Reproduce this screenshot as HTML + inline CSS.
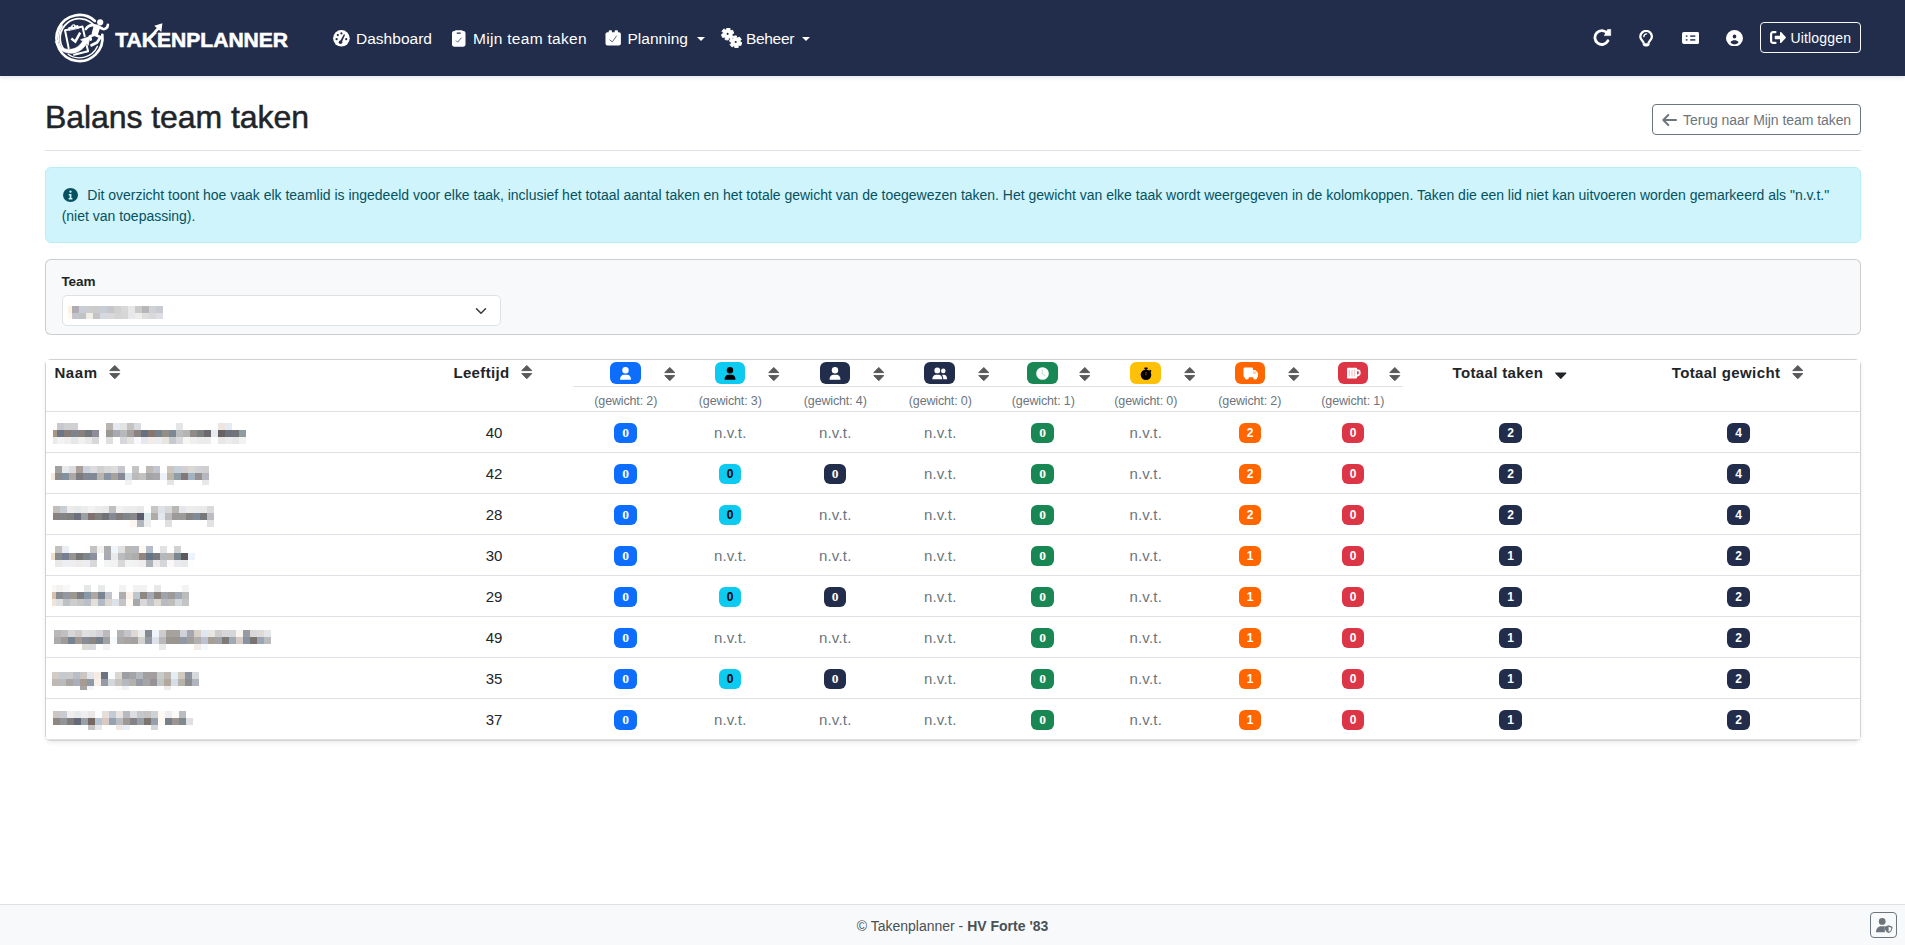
<!DOCTYPE html>
<html lang="nl">
<head>
<meta charset="utf-8">
<title>Balans team taken - Takenplanner</title>
<style>
*{box-sizing:border-box}
html,body{margin:0;padding:0}
body{width:1905px;height:945px;overflow:hidden;background:#fff;color:#212529;font-family:"Liberation Sans",sans-serif;font-size:15px;position:relative}
.abs{position:absolute}
svg{display:block}
/* NAVBAR */
#nav{position:absolute;left:0;top:0;width:1905px;height:76px;background:#212d4b;box-shadow:0 2px 4px rgba(0,0,0,.09)}
#nav .item{position:absolute;top:1px;height:76px;color:#fff;font-size:15.5px;line-height:76px;white-space:nowrap}
#nav .ic{position:absolute}
.caret{position:absolute;width:0;height:0;border-left:4px solid transparent;border-right:4px solid transparent;border-top:4px solid #fff}
#logout{position:absolute;left:1760px;top:22px;width:101px;height:31px;border:1px solid #f8f9fa;border-radius:4px;color:#fff;font-size:14px}
/* PAGE */
h2{position:absolute;left:45px;top:98px;margin:0;font-size:32px;line-height:38px;font-weight:400;letter-spacing:-.07px;color:#212529;white-space:nowrap;-webkit-text-stroke:.5px #212529}
#back{position:absolute;left:1652px;top:104px;width:209px;height:31px;border:1px solid #6c757d;border-radius:4px;color:#6c757d;font-size:13.5px}
#hr{position:absolute;left:45px;top:150px;width:1816px;height:1px;background:#dee2e6}
#alert{position:absolute;left:45px;top:167px;width:1816px;height:76px;background:#cff4fc;border:1px solid #b6effb;border-radius:6px;color:#055160;font-size:13px}
#filter{position:absolute;left:45px;top:259px;width:1816px;height:76px;background:#f8f9fa;border:1px solid rgba(0,0,0,.175);border-radius:6px}
#tcard{position:absolute;left:45px;top:359px;width:1816px;height:382px;background:#fff;border:1px solid rgba(0,0,0,.175);border-radius:6px;box-shadow:0 2px 4px rgba(0,0,0,.075)}
#tcard:before{content:"";position:absolute;left:0;top:0;right:0;bottom:0;background:#fff}
#footer{position:absolute;left:0;top:904px;width:1905px;height:41px;background:#f8f9fa;border-top:1px solid #dee2e6;color:#495057;font-size:14px;text-align:center;line-height:43px}

#tbl{position:absolute;left:0;top:0;width:1905px;height:945px}
.th{position:absolute;font-weight:700;font-size:15px;line-height:20px;white-space:nowrap;color:#212529}
.gw{position:absolute;top:391px;text-align:center;font-size:12.500px;line-height:20px;color:#6c757d;letter-spacing:-.15px;padding-left:1.500px}
.hl{position:absolute;left:46px;width:1814px;height:1px;background:#dee2e6}
.td{position:absolute;height:40px;line-height:41px;text-align:center;font-size:15px;color:#212529}
.td.nvt{color:#6c757d;letter-spacing:.2px;padding-left:1.500px}
.bdg{position:absolute;height:20px;border-radius:6px;text-align:center;font-weight:700;font-size:12px;line-height:21px}
.bdg.sf{font-family:"Liberation Serif",serif;font-size:13.500px;line-height:20px}
/*ENDTBL*/
</style>
</head>
<body>
<div id="nav">
<!-- logo -->
<svg class="ic" style="left:50px;top:8px" width="70" height="60" viewBox="0 0 70 60" fill="none" stroke="#fff" stroke-linecap="round" stroke-linejoin="round">
<path d="M52.28 26.80A23 23 0 1 1 44.89 12.91" stroke-width="2.7"/>
<path d="M14.72 42.41A19.3 19.3 0 1 1 44.71 18.12" stroke-width="1.7"/>
<path d="M11.31 40.50A21 21 0 0 1 12.30 17.95" stroke-width="1.4"/>
<path d="M47.44 38.37A19.8 19.8 0 0 1 18.14 46.22" stroke-width="1.3"/>
<path d="M5.300 33.500C7.500 41 14 45.800 22 45.300C29.500 44.800 35.500 39.500 38 32.500L33.500 31.500C30.500 37.500 25.500 41.300 19.500 41.300C13 41.300 8.500 38.500 5.300 33.500Z" fill="#fff" stroke-width=".5"/>
<path d="M31 31.600L39.800 28.600L38.300 37Z" fill="#fff" stroke-width=".8"/>
<path d="M15 22.300L18.700 40.300M32.400 18.500L34.700 28.300M36.800 38L38.100 43.200L24 46.700M15 22.300L19 21.400M28.300 19.400L32.400 18.500" stroke-width="2"/>
<path d="M19 22L18.600 19.700L21.200 19.100C21.100 16.600 25 15.800 25.700 18.100L28 17.600L28.500 19.900Z" fill="#fff" stroke-width=".9"/>
<circle cx="23.400" cy="18.200" r=".8" fill="#212d4b" stroke="none"/>
<path d="M21.300 30.600L25.300 33.700L30.200 24.600" stroke-width="2.500" stroke-linecap="butt" stroke-linejoin="miter"/>
<circle cx="50.200" cy="14.300" r="3.100" fill="#fff" stroke="none"/>
<path d="M47 18L52.500 20.800C55.300 21.800 57.600 19.800 57.900 16.800M46 17.700C42 16.500 38 18 35.800 21M44.500 26.500L50.500 29.300L47 34.500L41.500 37.300M44 26.800L39.800 28.400L40.800 31.500" stroke-width="2.700"/>
<path d="M44.500 18.300L49.200 20L46.800 27L42.600 25.300Z" fill="#fff" stroke-width="1.800"/>
</svg>
<svg class="ic" style="left:112px;top:18px" width="184" height="36" viewBox="112 18 184 36">
<text x="115.300" y="47" font-family="'Liberation Sans',sans-serif" font-weight="700" font-size="19.600" fill="#fff" stroke="#fff" stroke-width=".55" textLength="172.800" lengthAdjust="spacingAndGlyphs">TAKENPLANNER</text>
<path d="M150.600 37.800C153.500 33.500 156.500 30 159.500 27" stroke="#fff" stroke-width="2.600" fill="none"/>
<path d="M154.300 25.700L162.400 23.300L161.300 31.900Z" fill="#fff"/>
</svg>
<!-- nav items -->
<svg class="ic" style="left:333px;top:29.500px" width="17" height="17" viewBox="0 0 17 17"><circle cx="8.400" cy="8.300" r="8.300" fill="#fff"/><g fill="#212d4b"><circle cx="3.600" cy="9.200" r="1.100"/><circle cx="4.800" cy="5.100" r="1.100"/><circle cx="8.400" cy="3.400" r="1.100"/><circle cx="13.200" cy="9.200" r="1.100"/><circle cx="7.500" cy="12.300" r="1.800"/><path d="M6.800 11.800L10.900 4.200L12.100 4.800L8.600 12.700Z"/></g></svg>
<div class="item" style="left:356px;letter-spacing:.02px">Dashboard</div>
<svg class="ic" style="left:452px;top:29.500px" width="14" height="17" viewBox="0 0 14 17"><rect x="0" y=".9" width="13.500" height="15.800" rx="2.100" fill="#fff"/><rect x="2.700" y=".3" width="8.100" height="3" rx="1.200" fill="#fff"/><rect x="4.600" y="2.400" width="4.300" height="1.300" rx=".65" fill="#212d4b"/><path d="M4 10.600L5.600 12.200L9.500 7.700" stroke="#5d657c" stroke-width="1" fill="none"/></svg>
<div class="item" style="left:473px;letter-spacing:.3px">Mijn team taken</div>
<svg class="ic" style="left:605px;top:29.500px" width="16" height="16" viewBox="0 0 16 16"><rect x=".5" y="2.300" width="15.400" height="13.200" rx="2" fill="#fff"/><rect x="3.800" y=".3" width="3.200" height="3.500" rx=".9" fill="#fff"/><rect x="9.700" y=".3" width="3.200" height="3.500" rx=".9" fill="#fff"/><path d="M4.600 9.800L7.300 11.900L11.700 5.700" stroke="#5d657c" stroke-width="1" fill="none"/></svg>
<div class="item" style="left:627.500px;letter-spacing:.02px">Planning</div>
<div class="caret" style="left:697px;top:36.500px"></div>
<svg class="ic" style="left:720.500px;top:28px" width="21" height="20" viewBox="0 0 21 20"><path d="M5.48 1.54L6.02 -0.27L9.06 0.21L9.01 2.10L9.82 2.75L11.65 2.31L12.76 5.19L11.10 6.09L10.93 7.11L12.24 8.48L10.30 10.88L8.68 9.89L7.72 10.26L7.18 12.07L4.14 11.59L4.19 9.70L3.38 9.05L1.55 9.49L0.44 6.61L2.10 5.71L2.27 4.69L0.96 3.32L2.90 0.92L4.52 1.91Z" fill="#fff" stroke="#fff" stroke-width=".9" stroke-linejoin="round"/><circle cx="6.6" cy="5.9" r="1.050" fill="#212d4b"/><path d="M12.29 10.20L12.24 8.31L15.28 7.83L15.82 9.64L16.78 10.01L18.40 9.02L20.34 11.42L19.03 12.79L19.20 13.81L20.86 14.71L19.75 17.59L17.92 17.15L17.11 17.80L17.16 19.69L14.12 20.17L13.58 18.36L12.62 17.99L11.00 18.98L9.06 16.58L10.37 15.21L10.20 14.19L8.54 13.29L9.65 10.41L11.48 10.85Z" fill="#fff" stroke="#fff" stroke-width=".9" stroke-linejoin="round"/><circle cx="14.7" cy="14" r="1.050" fill="#212d4b"/></svg>
<div class="item" style="left:746px;letter-spacing:-.33px">Beheer</div>
<div class="caret" style="left:802px;top:36.500px"></div>
<!-- right icons -->
<svg class="ic" style="left:1593px;top:29.200px" width="19" height="17" viewBox="0 0 19 17"><path d="M14.89 11.80A6.9 6.9 0 1 1 14.24 4.31" stroke="#fff" stroke-width="2.800" fill="none" stroke-linecap="round"/><path d="M14.600 .5L17.700 .3V6.600H11.300Z" fill="#fff" stroke="#fff" stroke-width=".6" stroke-linejoin="round"/></svg>
<svg class="ic" style="left:1639px;top:29.500px" width="15" height="17" viewBox="0 0 15 17"><path d="M4.800 13.400C4.800 11.300 1.300 9.800 1.300 6.700A5.800 5.800 0 0 1 12.900 6.700C12.900 9.800 9.400 11.300 9.400 13.400" stroke="#fff" stroke-width="2.300" fill="none"/><path d="M3.700 13.200h6.900v.9c0 1.300-1 2.300-2.300 2.300H6c-1.300 0-2.300-1-2.300-2.300z" fill="#fff"/><path d="M4.800 6.600A3 3 0 0 1 7.600 3.900" stroke="#fff" stroke-width="1.400" fill="none" stroke-linecap="round"/></svg>
<svg class="ic" style="left:1681.600px;top:32px" width="17.300" height="12" viewBox="0 0 17.300 12"><rect width="17.300" height="12" rx="1.900" fill="#fff"/><g fill="#4a5470"><rect x="3.800" y="3.200" width="1.700" height="1.700" rx=".3"/><rect x="3.800" y="7.100" width="1.700" height="1.700" rx=".3"/><rect x="8.100" y="3.200" width="5.300" height="1.700" rx=".5"/><rect x="8.100" y="7.100" width="5.300" height="1.700" rx=".5"/></g></svg>
<svg class="ic" style="left:1725.800px;top:29.800px" width="17" height="16.500" viewBox="0 0 17 16.500"><ellipse cx="8.500" cy="8.250" rx="8.500" ry="8.200" fill="#fff"/><ellipse cx="8.500" cy="6.400" rx="1.800" ry="2" fill="#212d4b"/><path d="M4.500 12.200C5.500 10.800 6.800 10.300 8.500 10.300S11.500 10.800 12.500 12.200C11.500 13.600 10.200 14.200 8.500 14.200S5.500 13.600 4.500 12.200Z" fill="#212d4b"/></svg>
<div id="logout">
<svg class="ic" style="left:9px;top:7.700px" width="16" height="13" viewBox="0 0 16 13"><path d="M5.500 1.100H3.100A2 2 0 0 0 1.100 3.100V9.900A2 2 0 0 0 3.100 11.900H5.500" stroke="#fff" stroke-width="2.200" fill="none" stroke-linecap="round"/><path d="M5.500 4.700H10V1.600C10 1 10.700 .7 11.100 1.100L15.700 5.900C16 6.200 16 6.800 15.700 7.100L11.100 11.900C10.700 12.300 10 12 10 11.400V8.300H5.500A.8 .8 0 0 1 4.700 7.500V5.500A.8 .8 0 0 1 5.500 4.700Z" fill="#fff"/></svg>
<span class="abs" style="left:29.400px;top:1px;line-height:29px;letter-spacing:.18px">Uitloggen</span>
</div>
</div>
<h2>Balans team taken</h2>
<div id="back">
<svg class="abs" style="left:8.800px;top:8.800px" width="15" height="12" viewBox="0 0 15 12"><path d="M14.200 6H1.500M6.300 1L1.300 6L6.300 11" stroke="#6c757d" stroke-width="1.900" fill="none" stroke-linecap="round" stroke-linejoin="round"/></svg>
<span class="abs" style="left:30px;top:0;line-height:30px;white-space:nowrap;letter-spacing:-.06px;font-size:14px">Terug naar Mijn team taken</span>
</div>
<div id="hr"></div>
<div id="alert">
<svg class="abs" style="left:17px;top:19.800px" width="15" height="14" viewBox="0 .5 15 14"><ellipse cx="7.500" cy="7.500" rx="7.500" ry="7" fill="#055160"/><circle cx="7.500" cy="4.200" r="1.150" fill="#cff4fc"/><path d="M5.800 6.600h2.600v3.900h1v1.400H5.700v-1.400h1V8H5.800z" fill="#cff4fc"/></svg>
<div class="abs" id="atext" style="left:15.700px;top:17px;width:1790px;line-height:21px;font-size:14px;text-indent:25.600px;letter-spacing:-.008px">Dit overzicht toont hoe vaak elk teamlid is ingedeeld voor elke taak, inclusief het totaal aantal taken en het totale gewicht van de toegewezen taken. Het gewicht van elke taak wordt weergegeven in de kolomkoppen. Taken die een lid niet kan uitvoeren worden gemarkeerd als "n.v.t." (niet van toepassing).</div>
</div>
<div id="filter">
<div class="abs" style="left:15.400px;top:12.500px;font-weight:700;font-size:13.500px;line-height:18px;letter-spacing:-.05px">Team</div>
<div class="abs" id="sel" style="left:16px;top:35px;width:439px;height:31px;background:#fff;border:1px solid #dee2e6;border-radius:5px">
<!--TEAMBLUR--><svg class="abs" style="left:-63px;top:-296px" width="300" height="400" viewBox="0 0 300 400" shape-rendering="crispEdges"><rect x="68" y="306" width="4" height="7" fill="#fdf2e0"/><rect x="72" y="306" width="7" height="7" fill="#b0acb4"/><rect x="79" y="306" width="7" height="7" fill="#c8cdd6"/><rect x="86" y="306" width="7" height="7" fill="#cccccc"/><rect x="93" y="306" width="7" height="7" fill="#cbcbcc"/><rect x="100" y="306" width="7" height="7" fill="#c8ccd4"/><rect x="107" y="306" width="7" height="7" fill="#c4c6cc"/><rect x="114" y="306" width="7" height="7" fill="#d0d0ce"/><rect x="121" y="306" width="7" height="7" fill="#d8d8d8"/><rect x="128" y="306" width="7" height="7" fill="#e6e7e8"/><rect x="135" y="306" width="7" height="7" fill="#cacac8"/><rect x="142" y="306" width="7" height="7" fill="#b6b6b8"/><rect x="149" y="306" width="7" height="7" fill="#d0d1d4"/><rect x="156" y="306" width="7" height="7" fill="#c8cbd2"/><rect x="68" y="313" width="4" height="6" fill="#fff8ec"/><rect x="72" y="313" width="7" height="6" fill="#c4c5cc"/><rect x="79" y="313" width="7" height="6" fill="#bfc3c6"/><rect x="86" y="313" width="7" height="6" fill="#f0eee6"/><rect x="93" y="313" width="7" height="6" fill="#c4c4c6"/><rect x="100" y="313" width="7" height="6" fill="#d6dae0"/><rect x="107" y="313" width="7" height="6" fill="#d8d9dc"/><rect x="114" y="313" width="7" height="6" fill="#d4d4d2"/><rect x="121" y="313" width="7" height="6" fill="#d6d6d6"/><rect x="128" y="313" width="7" height="6" fill="#e8e8ea"/><rect x="135" y="313" width="7" height="6" fill="#ededed"/><rect x="142" y="313" width="7" height="6" fill="#dededc"/><rect x="149" y="313" width="7" height="6" fill="#d8d8d8"/><rect x="156" y="313" width="7" height="6" fill="#dedfe4"/></svg>
<svg class="abs" style="left:412px;top:8.500px" width="12" height="12" viewBox="0 0 16 16"><path d="M2 5l6 6 6-6" fill="none" stroke="#343a40" stroke-width="2" stroke-linecap="round" stroke-linejoin="round"/></svg>
</div>
</div>
<div id="tcard"></div>
<div id="tbl">
<div class="th" style="left:54.400px;top:362.500px;letter-spacing:.6px">Naam</div><svg class="abs" style="left:109.2px;top:364.8px" width="11.6" height="14.2" viewBox="0 0 11.6 14.2"><path d="M5.800 .5L10.800 5.600H.8Z" fill="#58595b" stroke="#58595b" stroke-width="1" stroke-linejoin="round"/><path d="M.8 8.600H10.800L5.800 13.700Z" fill="#58595b" stroke="#58595b" stroke-width="1" stroke-linejoin="round"/></svg>
<div class="th" style="left:453.400px;top:362.500px;letter-spacing:.36px">Leeftijd</div><svg class="abs" style="left:521.2px;top:364.8px" width="11.6" height="14.2" viewBox="0 0 11.6 14.2"><path d="M5.800 .5L10.800 5.600H.8Z" fill="#58595b" stroke="#58595b" stroke-width="1" stroke-linejoin="round"/><path d="M.8 8.600H10.800L5.800 13.700Z" fill="#58595b" stroke="#58595b" stroke-width="1" stroke-linejoin="round"/></svg>
<div class="th" style="left:1452.500px;top:362.500px;letter-spacing:.36px">Totaal taken</div>
<svg class="abs" style="left:1555px;top:371.500px" width="11.600" height="7.200" viewBox="0 0 11.600 7.200"><path d="M.8 1H10.800L5.800 6.300Z" fill="#212529" stroke="#212529" stroke-width="1.200" stroke-linejoin="round"/></svg>
<div class="th" style="left:1671.700px;top:362.500px;letter-spacing:.4px">Totaal gewicht</div><svg class="abs" style="left:1791.8px;top:364.5px" width="11.6" height="14.2" viewBox="0 0 11.6 14.2"><path d="M5.800 .5L10.800 5.600H.8Z" fill="#58595b" stroke="#58595b" stroke-width="1" stroke-linejoin="round"/><path d="M.8 8.600H10.800L5.800 13.700Z" fill="#58595b" stroke="#58595b" stroke-width="1" stroke-linejoin="round"/></svg>
<div class="abs" style="left:573px;top:386px;width:830px;height:1px;background:#dee2e6"></div>
<svg class="abs" style="left:610px;top:362px" width="31" height="22" viewBox="0.0 0 31 22"><rect x="0.0" width="31" height="22" rx="6" fill="#0d6efd"/><circle cx="15.5" cy="8.3" r="3.2" fill="#fff"/><path d="M10 17.700c0-3 1.800-4.900 4-4.900h3c2.200 0 4 1.900 4 4.900z" fill="#fff"/></svg>
<svg class="abs" style="left:663.6px;top:366.7px" width="11.6" height="14.2" viewBox="0 0 11.6 14.2"><path d="M5.800 .5L10.800 5.600H.8Z" fill="#58595b" stroke="#58595b" stroke-width="1" stroke-linejoin="round"/><path d="M.8 8.600H10.800L5.800 13.700Z" fill="#58595b" stroke="#58595b" stroke-width="1" stroke-linejoin="round"/></svg>
<div class="gw" style="left:573px;width:104px">(gewicht: 2)</div>
<svg class="abs" style="left:715px;top:362px" width="31" height="22" viewBox="0.5 0 31 22"><rect x="0.5" width="30" height="22" rx="6" fill="#0dcaf0"/><circle cx="15.5" cy="8.3" r="3.2" fill="#000"/><path d="M10 17.700c0-3 1.800-4.900 4-4.900h3c2.200 0 4 1.900 4 4.900z" fill="#000"/></svg>
<svg class="abs" style="left:768.3px;top:366.7px" width="11.6" height="14.2" viewBox="0 0 11.6 14.2"><path d="M5.800 .5L10.800 5.600H.8Z" fill="#58595b" stroke="#58595b" stroke-width="1" stroke-linejoin="round"/><path d="M.8 8.600H10.800L5.800 13.700Z" fill="#58595b" stroke="#58595b" stroke-width="1" stroke-linejoin="round"/></svg>
<div class="gw" style="left:677px;width:105px">(gewicht: 3)</div>
<svg class="abs" style="left:820px;top:362px" width="31" height="22" viewBox="0.5 0 31 22"><rect x="0.5" width="30" height="22" rx="6" fill="#212d4b"/><circle cx="15.5" cy="8.3" r="3.2" fill="#fff"/><path d="M10 17.700c0-3 1.800-4.900 4-4.900h3c2.200 0 4 1.900 4 4.900z" fill="#fff"/></svg>
<svg class="abs" style="left:873.1px;top:366.7px" width="11.6" height="14.2" viewBox="0 0 11.6 14.2"><path d="M5.800 .5L10.800 5.600H.8Z" fill="#58595b" stroke="#58595b" stroke-width="1" stroke-linejoin="round"/><path d="M.8 8.600H10.800L5.800 13.700Z" fill="#58595b" stroke="#58595b" stroke-width="1" stroke-linejoin="round"/></svg>
<div class="gw" style="left:782px;width:105px">(gewicht: 4)</div>
<svg class="abs" style="left:924px;top:362px" width="31" height="22" viewBox="0.0 0 31 22"><rect x="0.0" width="31" height="22" rx="6" fill="#212d4b"/><circle cx="13.300" cy="8.400" r="2.900" fill="#fff"/><path d="M8.300 17.300c0-2.800 1.600-4.600 3.700-4.600h2.600c2.100 0 3.700 1.800 3.700 4.600z" fill="#fff"/><circle cx="19.300" cy="8.900" r="2.300" fill="#fff"/><path d="M19.300 17.300c0-1.800-.4-3.200-1.300-4.300.3-.1.600-.2 1-.2h1c1.700 0 3 1.600 3 4v.5z" fill="#fff"/></svg>
<svg class="abs" style="left:977.8px;top:366.7px" width="11.6" height="14.2" viewBox="0 0 11.6 14.2"><path d="M5.800 .5L10.800 5.600H.8Z" fill="#58595b" stroke="#58595b" stroke-width="1" stroke-linejoin="round"/><path d="M.8 8.600H10.800L5.800 13.700Z" fill="#58595b" stroke="#58595b" stroke-width="1" stroke-linejoin="round"/></svg>
<div class="gw" style="left:887px;width:105px">(gewicht: 0)</div>
<svg class="abs" style="left:1027px;top:362px" width="31" height="22" viewBox="0.0 0 31 22"><rect x="0.0" width="31" height="22" rx="6" fill="#198754"/><circle cx="15.500" cy="11.500" r="6.300" fill="#fff"/><path d="M15.300 7.800v4l2.600 1.700" stroke="#c6e6d6" stroke-width="1.200" fill="none" stroke-linecap="round"/></svg>
<svg class="abs" style="left:1078.8px;top:366.7px" width="11.6" height="14.2" viewBox="0 0 11.6 14.2"><path d="M5.800 .5L10.800 5.600H.8Z" fill="#58595b" stroke="#58595b" stroke-width="1" stroke-linejoin="round"/><path d="M.8 8.600H10.800L5.800 13.700Z" fill="#58595b" stroke="#58595b" stroke-width="1" stroke-linejoin="round"/></svg>
<div class="gw" style="left:992px;width:101px">(gewicht: 1)</div>
<svg class="abs" style="left:1130px;top:362px" width="31" height="22" viewBox="0.0 0 31 22"><rect x="0.0" width="31" height="22" rx="6" fill="#ffc107"/><circle cx="16" cy="12.800" r="5.300" fill="#000"/><rect x="14.300" y="5.500" width="3.400" height="1.500" rx=".5" fill="#000"/><rect x="15.300" y="6.200" width="1.400" height="2" fill="#000"/><rect x="15.500" y="9.800" width="1" height="3.600" rx=".5" fill="#7a4a00"/><path d="M19.600 8l1.100 1.100-1 1" stroke="#000" stroke-width="1.200" fill="none"/></svg>
<svg class="abs" style="left:1183.9px;top:366.7px" width="11.6" height="14.2" viewBox="0 0 11.6 14.2"><path d="M5.800 .5L10.800 5.600H.8Z" fill="#58595b" stroke="#58595b" stroke-width="1" stroke-linejoin="round"/><path d="M.8 8.600H10.800L5.800 13.700Z" fill="#58595b" stroke="#58595b" stroke-width="1" stroke-linejoin="round"/></svg>
<div class="gw" style="left:1093px;width:104px">(gewicht: 0)</div>
<svg class="abs" style="left:1235px;top:362px" width="31" height="22" viewBox="0.5 0 31 22"><rect x="0.5" width="30" height="22" rx="6" fill="#ff6600"/><g transform="translate(1.100 0) scale(.93 1)"><path d="M8.500 6.800a1.200 1.200 0 0 1 1.200-1.200h7.800a1.200 1.200 0 0 1 1.200 1.200v1.300h2.100c.4 0 .7.100 1 .400l1.900 1.900c.300.300.400.600.400 1v3.800h-.800a2.300 2.300 0 0 1-4.600 0h-4.400a2.300 2.300 0 0 1-4.600 0h-.0a1.200 1.200 0 0 1-1.200-1.200z" fill="#fff"/><circle cx="12" cy="15.200" r="1.600" fill="#fff"/><circle cx="21" cy="15.200" r="1.600" fill="#fff"/><path d="M18.700 9.300h2.100l1.800 1.800v.6h-3.900z" fill="#ffc9a3"/></g></svg>
<svg class="abs" style="left:1288.3px;top:366.7px" width="11.6" height="14.2" viewBox="0 0 11.6 14.2"><path d="M5.800 .5L10.800 5.600H.8Z" fill="#58595b" stroke="#58595b" stroke-width="1" stroke-linejoin="round"/><path d="M.8 8.600H10.800L5.800 13.700Z" fill="#58595b" stroke="#58595b" stroke-width="1" stroke-linejoin="round"/></svg>
<div class="gw" style="left:1197px;width:104px">(gewicht: 2)</div>
<svg class="abs" style="left:1338px;top:362px" width="31" height="22" viewBox="0.5 0 31 22"><rect x="0.5" width="30" height="22" rx="6" fill="#dc3545"/><path d="M9.500 6.800a1 1 0 0 1 1-1h8a1 1 0 0 1 1 1v.8h1.300a2.300 2.300 0 0 1 2.300 2.300v1.700c0 .900-.5 1.700-1.300 2.100l-2.300 1v.7a1 1 0 0 1-1 1h-8a1 1 0 0 1-1-1z" fill="#fff"/><path d="M19.500 9.300h1a.7 .7 0 0 1 .7.700v1.500c0 .3-.2.500-.4.600l-1.300.6z" fill="#dc3545"/><path d="M11.800 8v6M14.500 8v6M17.200 8v6" stroke="#f6b8c0" stroke-width="1" stroke-linecap="round"/></svg>
<svg class="abs" style="left:1389.3px;top:366.7px" width="11.6" height="14.2" viewBox="0 0 11.6 14.2"><path d="M5.800 .5L10.800 5.600H.8Z" fill="#58595b" stroke="#58595b" stroke-width="1" stroke-linejoin="round"/><path d="M.8 8.600H10.800L5.800 13.700Z" fill="#58595b" stroke="#58595b" stroke-width="1" stroke-linejoin="round"/></svg>
<div class="gw" style="left:1301px;width:102px">(gewicht: 1)</div>
<div class="hl" style="top:411px"></div>
<div class="hl" style="top:452px"></div>
<div class="td" style="left:415px;width:158px;top:412px">40</div>
<div class="bdg sf" style="left:614px;top:423px;width:23px;background:#0d6efd;color:#fff">0</div>
<div class="td nvt" style="left:677px;width:105px;top:412px">n.v.t.</div>
<div class="td nvt" style="left:782px;width:105px;top:412px">n.v.t.</div>
<div class="td nvt" style="left:887px;width:105px;top:412px">n.v.t.</div>
<div class="bdg sf" style="left:1031px;top:423px;width:23px;background:#198754;color:#fff">0</div>
<div class="td nvt" style="left:1093px;width:104px;top:412px">n.v.t.</div>
<div class="bdg" style="left:1239px;top:423px;width:22px;background:#ff6600;color:#fff">2</div>
<div class="bdg" style="left:1342px;top:423px;width:22px;background:#dc3545;color:#fff">0</div>
<div class="bdg" style="left:1499px;top:423px;width:23px;background:#212d4b;color:#fff">2</div>
<div class="bdg" style="left:1727px;top:423px;width:23px;background:#212d4b;color:#fff">4</div>
<div class="hl" style="top:493px"></div>
<div class="td" style="left:415px;width:158px;top:453px">42</div>
<div class="bdg sf" style="left:614px;top:464px;width:23px;background:#0d6efd;color:#fff">0</div>
<div class="bdg" style="left:719px;top:464px;width:22px;background:#0dcaf0;color:#000">0</div>
<div class="bdg sf" style="left:824px;top:464px;width:22px;background:#212d4b;color:#fff">0</div>
<div class="td nvt" style="left:887px;width:105px;top:453px">n.v.t.</div>
<div class="bdg sf" style="left:1031px;top:464px;width:23px;background:#198754;color:#fff">0</div>
<div class="td nvt" style="left:1093px;width:104px;top:453px">n.v.t.</div>
<div class="bdg" style="left:1239px;top:464px;width:22px;background:#ff6600;color:#fff">2</div>
<div class="bdg" style="left:1342px;top:464px;width:22px;background:#dc3545;color:#fff">0</div>
<div class="bdg" style="left:1499px;top:464px;width:23px;background:#212d4b;color:#fff">2</div>
<div class="bdg" style="left:1727px;top:464px;width:23px;background:#212d4b;color:#fff">4</div>
<div class="hl" style="top:534px"></div>
<div class="td" style="left:415px;width:158px;top:494px">28</div>
<div class="bdg sf" style="left:614px;top:505px;width:23px;background:#0d6efd;color:#fff">0</div>
<div class="bdg" style="left:719px;top:505px;width:22px;background:#0dcaf0;color:#000">0</div>
<div class="td nvt" style="left:782px;width:105px;top:494px">n.v.t.</div>
<div class="td nvt" style="left:887px;width:105px;top:494px">n.v.t.</div>
<div class="bdg sf" style="left:1031px;top:505px;width:23px;background:#198754;color:#fff">0</div>
<div class="td nvt" style="left:1093px;width:104px;top:494px">n.v.t.</div>
<div class="bdg" style="left:1239px;top:505px;width:22px;background:#ff6600;color:#fff">2</div>
<div class="bdg" style="left:1342px;top:505px;width:22px;background:#dc3545;color:#fff">0</div>
<div class="bdg" style="left:1499px;top:505px;width:23px;background:#212d4b;color:#fff">2</div>
<div class="bdg" style="left:1727px;top:505px;width:23px;background:#212d4b;color:#fff">4</div>
<div class="hl" style="top:575px"></div>
<div class="td" style="left:415px;width:158px;top:535px">30</div>
<div class="bdg sf" style="left:614px;top:546px;width:23px;background:#0d6efd;color:#fff">0</div>
<div class="td nvt" style="left:677px;width:105px;top:535px">n.v.t.</div>
<div class="td nvt" style="left:782px;width:105px;top:535px">n.v.t.</div>
<div class="td nvt" style="left:887px;width:105px;top:535px">n.v.t.</div>
<div class="bdg sf" style="left:1031px;top:546px;width:23px;background:#198754;color:#fff">0</div>
<div class="td nvt" style="left:1093px;width:104px;top:535px">n.v.t.</div>
<div class="bdg" style="left:1239px;top:546px;width:22px;background:#ff6600;color:#fff">1</div>
<div class="bdg" style="left:1342px;top:546px;width:22px;background:#dc3545;color:#fff">0</div>
<div class="bdg" style="left:1499px;top:546px;width:23px;background:#212d4b;color:#fff">1</div>
<div class="bdg" style="left:1727px;top:546px;width:23px;background:#212d4b;color:#fff">2</div>
<div class="hl" style="top:616px"></div>
<div class="td" style="left:415px;width:158px;top:576px">29</div>
<div class="bdg sf" style="left:614px;top:587px;width:23px;background:#0d6efd;color:#fff">0</div>
<div class="bdg" style="left:719px;top:587px;width:22px;background:#0dcaf0;color:#000">0</div>
<div class="bdg sf" style="left:824px;top:587px;width:22px;background:#212d4b;color:#fff">0</div>
<div class="td nvt" style="left:887px;width:105px;top:576px">n.v.t.</div>
<div class="bdg sf" style="left:1031px;top:587px;width:23px;background:#198754;color:#fff">0</div>
<div class="td nvt" style="left:1093px;width:104px;top:576px">n.v.t.</div>
<div class="bdg" style="left:1239px;top:587px;width:22px;background:#ff6600;color:#fff">1</div>
<div class="bdg" style="left:1342px;top:587px;width:22px;background:#dc3545;color:#fff">0</div>
<div class="bdg" style="left:1499px;top:587px;width:23px;background:#212d4b;color:#fff">1</div>
<div class="bdg" style="left:1727px;top:587px;width:23px;background:#212d4b;color:#fff">2</div>
<div class="hl" style="top:657px"></div>
<div class="td" style="left:415px;width:158px;top:617px">49</div>
<div class="bdg sf" style="left:614px;top:628px;width:23px;background:#0d6efd;color:#fff">0</div>
<div class="td nvt" style="left:677px;width:105px;top:617px">n.v.t.</div>
<div class="td nvt" style="left:782px;width:105px;top:617px">n.v.t.</div>
<div class="td nvt" style="left:887px;width:105px;top:617px">n.v.t.</div>
<div class="bdg sf" style="left:1031px;top:628px;width:23px;background:#198754;color:#fff">0</div>
<div class="td nvt" style="left:1093px;width:104px;top:617px">n.v.t.</div>
<div class="bdg" style="left:1239px;top:628px;width:22px;background:#ff6600;color:#fff">1</div>
<div class="bdg" style="left:1342px;top:628px;width:22px;background:#dc3545;color:#fff">0</div>
<div class="bdg" style="left:1499px;top:628px;width:23px;background:#212d4b;color:#fff">1</div>
<div class="bdg" style="left:1727px;top:628px;width:23px;background:#212d4b;color:#fff">2</div>
<div class="hl" style="top:698px"></div>
<div class="td" style="left:415px;width:158px;top:658px">35</div>
<div class="bdg sf" style="left:614px;top:669px;width:23px;background:#0d6efd;color:#fff">0</div>
<div class="bdg" style="left:719px;top:669px;width:22px;background:#0dcaf0;color:#000">0</div>
<div class="bdg sf" style="left:824px;top:669px;width:22px;background:#212d4b;color:#fff">0</div>
<div class="td nvt" style="left:887px;width:105px;top:658px">n.v.t.</div>
<div class="bdg sf" style="left:1031px;top:669px;width:23px;background:#198754;color:#fff">0</div>
<div class="td nvt" style="left:1093px;width:104px;top:658px">n.v.t.</div>
<div class="bdg" style="left:1239px;top:669px;width:22px;background:#ff6600;color:#fff">1</div>
<div class="bdg" style="left:1342px;top:669px;width:22px;background:#dc3545;color:#fff">0</div>
<div class="bdg" style="left:1499px;top:669px;width:23px;background:#212d4b;color:#fff">1</div>
<div class="bdg" style="left:1727px;top:669px;width:23px;background:#212d4b;color:#fff">2</div>
<div class="hl" style="top:739px"></div>
<div class="td" style="left:415px;width:158px;top:699px">37</div>
<div class="bdg sf" style="left:614px;top:710px;width:23px;background:#0d6efd;color:#fff">0</div>
<div class="td nvt" style="left:677px;width:105px;top:699px">n.v.t.</div>
<div class="td nvt" style="left:782px;width:105px;top:699px">n.v.t.</div>
<div class="td nvt" style="left:887px;width:105px;top:699px">n.v.t.</div>
<div class="bdg sf" style="left:1031px;top:710px;width:23px;background:#198754;color:#fff">0</div>
<div class="td nvt" style="left:1093px;width:104px;top:699px">n.v.t.</div>
<div class="bdg" style="left:1239px;top:710px;width:22px;background:#ff6600;color:#fff">1</div>
<div class="bdg" style="left:1342px;top:710px;width:22px;background:#dc3545;color:#fff">0</div>
<div class="bdg" style="left:1499px;top:710px;width:23px;background:#212d4b;color:#fff">1</div>
<div class="bdg" style="left:1727px;top:710px;width:23px;background:#212d4b;color:#fff">2</div>
<!--NAMES--><svg class="abs" style="left:0;top:0" width="300" height="945" viewBox="0 0 300 945" shape-rendering="crispEdges"><rect x="53" y="423" width="4" height="7" fill="#fffdfb"/><rect x="57" y="423" width="7" height="7" fill="#c8c9ce"/><rect x="64" y="423" width="7" height="7" fill="#cfd0d2"/><rect x="71" y="423" width="7" height="7" fill="#d0d0d2"/><rect x="106" y="423" width="7" height="7" fill="#b8b4b0"/><rect x="113" y="423" width="7" height="7" fill="#e4e9ef"/><rect x="120" y="423" width="7" height="7" fill="#e2e4e4"/><rect x="127" y="423" width="7" height="7" fill="#c5c3bf"/><rect x="134" y="423" width="7" height="7" fill="#d8dbe2"/><rect x="169" y="423" width="7" height="7" fill="#fefefe"/><rect x="176" y="423" width="7" height="7" fill="#e4e5e7"/><rect x="218" y="423" width="7" height="7" fill="#ece6df"/><rect x="225" y="423" width="7" height="7" fill="#e6eaf4"/><rect x="53" y="430" width="4" height="7" fill="#a89684"/><rect x="57" y="430" width="7" height="7" fill="#6b7786"/><rect x="64" y="430" width="7" height="7" fill="#857d78"/><rect x="71" y="430" width="7" height="7" fill="#7d8490"/><rect x="78" y="430" width="7" height="7" fill="#87817d"/><rect x="85" y="430" width="7" height="7" fill="#6f797c"/><rect x="92" y="430" width="7" height="7" fill="#8e8c98"/><rect x="99" y="430" width="7" height="7" fill="#fbfcfe"/><rect x="106" y="430" width="7" height="7" fill="#9a9894"/><rect x="113" y="430" width="7" height="7" fill="#a6a8b2"/><rect x="120" y="430" width="7" height="7" fill="#b8b8ba"/><rect x="127" y="430" width="7" height="7" fill="#a3a19f"/><rect x="134" y="430" width="7" height="7" fill="#8a8480"/><rect x="141" y="430" width="7" height="7" fill="#667080"/><rect x="148" y="430" width="7" height="7" fill="#85776f"/><rect x="155" y="430" width="7" height="7" fill="#78828c"/><rect x="162" y="430" width="7" height="7" fill="#918d89"/><rect x="169" y="430" width="7" height="7" fill="#7e8794"/><rect x="176" y="430" width="7" height="7" fill="#bcbcbf"/><rect x="183" y="430" width="7" height="7" fill="#b6b4b2"/><rect x="190" y="430" width="7" height="7" fill="#8e8a88"/><rect x="197" y="430" width="7" height="7" fill="#7a8080"/><rect x="204" y="430" width="7" height="7" fill="#6a696e"/><rect x="211" y="430" width="7" height="7" fill="#e6ecee"/><rect x="218" y="430" width="7" height="7" fill="#666264"/><rect x="225" y="430" width="7" height="7" fill="#6e717b"/><rect x="232" y="430" width="7" height="7" fill="#727378"/><rect x="239" y="430" width="7" height="7" fill="#8f9c9f"/><rect x="53" y="437" width="4" height="7" fill="#e9eaeb"/><rect x="57" y="437" width="7" height="7" fill="#f4f3f1"/><rect x="64" y="437" width="7" height="7" fill="#efeff0"/><rect x="71" y="437" width="7" height="7" fill="#e6e7ea"/><rect x="78" y="437" width="7" height="7" fill="#f2f1ef"/><rect x="85" y="437" width="7" height="7" fill="#e8e9eb"/><rect x="92" y="437" width="7" height="7" fill="#d9d7d8"/><rect x="99" y="437" width="7" height="7" fill="#fbfdfe"/><rect x="106" y="437" width="7" height="7" fill="#e0dfdf"/><rect x="120" y="437" width="7" height="7" fill="#d6d7da"/><rect x="127" y="437" width="7" height="7" fill="#e6e4e2"/><rect x="134" y="437" width="7" height="7" fill="#f8f9fc"/><rect x="141" y="437" width="7" height="7" fill="#e7e8eb"/><rect x="148" y="437" width="7" height="7" fill="#efece9"/><rect x="155" y="437" width="7" height="7" fill="#ecedef"/><rect x="162" y="437" width="7" height="7" fill="#e8e6e0"/><rect x="169" y="437" width="7" height="7" fill="#c6cacd"/><rect x="176" y="437" width="7" height="7" fill="#d8dade"/><rect x="183" y="437" width="7" height="7" fill="#f8f6f3"/><rect x="190" y="437" width="7" height="7" fill="#efefef"/><rect x="197" y="437" width="7" height="7" fill="#ebebeb"/><rect x="204" y="437" width="7" height="7" fill="#ececec"/><rect x="211" y="437" width="7" height="7" fill="#fcfdfe"/><rect x="218" y="437" width="7" height="7" fill="#e9e7e6"/><rect x="225" y="437" width="7" height="7" fill="#ececec"/><rect x="232" y="437" width="7" height="7" fill="#e8e8ea"/><rect x="239" y="437" width="7" height="7" fill="#f1f3f2"/><rect x="55" y="466" width="7" height="7" fill="#a2a1a0"/><rect x="62" y="466" width="7" height="7" fill="#e8e9ea"/><rect x="69" y="466" width="7" height="7" fill="#dcdcde"/><rect x="76" y="466" width="7" height="7" fill="#aaa09a"/><rect x="83" y="466" width="7" height="7" fill="#ccd3de"/><rect x="90" y="466" width="7" height="7" fill="#dcdcde"/><rect x="97" y="466" width="7" height="7" fill="#d0d0d0"/><rect x="104" y="466" width="7" height="7" fill="#d8d8d8"/><rect x="111" y="466" width="7" height="7" fill="#dcdddc"/><rect x="118" y="466" width="7" height="7" fill="#c6c8ce"/><rect x="132" y="466" width="7" height="7" fill="#c4c4c6"/><rect x="146" y="466" width="7" height="7" fill="#c0bab6"/><rect x="153" y="466" width="7" height="7" fill="#c2c6d0"/><rect x="167" y="466" width="7" height="7" fill="#cec6be"/><rect x="174" y="466" width="7" height="7" fill="#c6d0da"/><rect x="181" y="466" width="7" height="7" fill="#d2d0d0"/><rect x="188" y="466" width="7" height="7" fill="#dad8d4"/><rect x="195" y="466" width="7" height="7" fill="#d0d2d6"/><rect x="202" y="466" width="7" height="7" fill="#cfcfd1"/><rect x="51" y="473" width="4" height="7" fill="#f6e8dc"/><rect x="55" y="473" width="7" height="7" fill="#8c8a8a"/><rect x="62" y="473" width="7" height="7" fill="#8290a0"/><rect x="69" y="473" width="7" height="7" fill="#aea8a4"/><rect x="76" y="473" width="7" height="7" fill="#7c7c7e"/><rect x="83" y="473" width="7" height="7" fill="#838891"/><rect x="90" y="473" width="7" height="7" fill="#828898"/><rect x="97" y="473" width="7" height="7" fill="#b8b4ae"/><rect x="104" y="473" width="7" height="7" fill="#8a94a2"/><rect x="111" y="473" width="7" height="7" fill="#a8a29c"/><rect x="118" y="473" width="7" height="7" fill="#878a96"/><rect x="125" y="473" width="7" height="7" fill="#d8e0e8"/><rect x="132" y="473" width="7" height="7" fill="#bcbab8"/><rect x="139" y="473" width="7" height="7" fill="#c2c2c2"/><rect x="146" y="473" width="7" height="7" fill="#a4a6a6"/><rect x="153" y="473" width="7" height="7" fill="#a8a8ac"/><rect x="160" y="473" width="7" height="7" fill="#eef2f8"/><rect x="167" y="473" width="7" height="7" fill="#beb4aa"/><rect x="174" y="473" width="7" height="7" fill="#909ea8"/><rect x="181" y="473" width="7" height="7" fill="#81787a"/><rect x="188" y="473" width="7" height="7" fill="#a2b2c0"/><rect x="195" y="473" width="7" height="7" fill="#969092"/><rect x="202" y="473" width="7" height="7" fill="#b4b8be"/><rect x="125" y="480" width="7" height="5" fill="#f2f2f2"/><rect x="167" y="480" width="7" height="5" fill="#e4e4e4"/><rect x="202" y="480" width="7" height="5" fill="#e8e8e8"/><rect x="53" y="506" width="7" height="7" fill="#c2beba"/><rect x="60" y="506" width="7" height="7" fill="#c9cdd4"/><rect x="67" y="506" width="7" height="7" fill="#ececec"/><rect x="74" y="506" width="7" height="7" fill="#e6e8ea"/><rect x="81" y="506" width="7" height="7" fill="#eeecea"/><rect x="88" y="506" width="7" height="7" fill="#f2f2f2"/><rect x="95" y="506" width="7" height="7" fill="#ececec"/><rect x="102" y="506" width="7" height="7" fill="#e8e9eb"/><rect x="109" y="506" width="7" height="7" fill="#c0c0c0"/><rect x="116" y="506" width="7" height="7" fill="#f2f2f2"/><rect x="123" y="506" width="7" height="7" fill="#ecedec"/><rect x="130" y="506" width="7" height="7" fill="#ebecee"/><rect x="137" y="506" width="7" height="7" fill="#e8e8e8"/><rect x="144" y="506" width="7" height="7" fill="#fdfefe"/><rect x="151" y="506" width="7" height="7" fill="#c8c6c3"/><rect x="158" y="506" width="7" height="7" fill="#dde2e6"/><rect x="165" y="506" width="7" height="7" fill="#d8d8d8"/><rect x="172" y="506" width="7" height="7" fill="#b8b7b4"/><rect x="179" y="506" width="7" height="7" fill="#e6e7e9"/><rect x="186" y="506" width="7" height="7" fill="#ededed"/><rect x="193" y="506" width="7" height="7" fill="#eaebec"/><rect x="200" y="506" width="7" height="7" fill="#eaeaea"/><rect x="207" y="506" width="7" height="7" fill="#d9dada"/><rect x="53" y="513" width="7" height="7" fill="#858180"/><rect x="60" y="513" width="7" height="7" fill="#848384"/><rect x="67" y="513" width="7" height="7" fill="#807f7f"/><rect x="74" y="513" width="7" height="7" fill="#6c6f7c"/><rect x="81" y="513" width="7" height="7" fill="#9aa0a3"/><rect x="88" y="513" width="7" height="7" fill="#7e7270"/><rect x="95" y="513" width="7" height="7" fill="#7f807f"/><rect x="102" y="513" width="7" height="7" fill="#717278"/><rect x="109" y="513" width="7" height="7" fill="#828a96"/><rect x="116" y="513" width="7" height="7" fill="#817b79"/><rect x="123" y="513" width="7" height="7" fill="#7f868b"/><rect x="130" y="513" width="7" height="7" fill="#8b898a"/><rect x="137" y="513" width="7" height="7" fill="#5a5c6c"/><rect x="144" y="513" width="7" height="7" fill="#dfeaec"/><rect x="151" y="513" width="7" height="7" fill="#aeaba8"/><rect x="158" y="513" width="7" height="7" fill="#e3e8ec"/><rect x="165" y="513" width="7" height="7" fill="#bcbdc0"/><rect x="172" y="513" width="7" height="7" fill="#9d9b99"/><rect x="179" y="513" width="7" height="7" fill="#9c9b9a"/><rect x="186" y="513" width="7" height="7" fill="#868380"/><rect x="193" y="513" width="7" height="7" fill="#7e8b9b"/><rect x="200" y="513" width="7" height="7" fill="#777879"/><rect x="207" y="513" width="7" height="7" fill="#bcbdc0"/><rect x="130" y="520" width="7" height="7" fill="#fdf6f2"/><rect x="137" y="520" width="7" height="7" fill="#b0b6bd"/><rect x="144" y="520" width="7" height="7" fill="#ededed"/><rect x="165" y="520" width="7" height="7" fill="#e0e0e0"/><rect x="207" y="520" width="7" height="7" fill="#e2e2e2"/><rect x="55" y="546" width="7" height="7" fill="#c3c0be"/><rect x="62" y="546" width="7" height="7" fill="#e8eef3"/><rect x="83" y="546" width="7" height="7" fill="#fffefd"/><rect x="90" y="546" width="7" height="7" fill="#c3c3c6"/><rect x="97" y="546" width="7" height="7" fill="#f4f1ec"/><rect x="104" y="546" width="7" height="7" fill="#aaacb0"/><rect x="111" y="546" width="7" height="7" fill="#eef5fb"/><rect x="118" y="546" width="7" height="7" fill="#e1e1e1"/><rect x="125" y="546" width="7" height="7" fill="#bbb9b6"/><rect x="132" y="546" width="7" height="7" fill="#b6b9c0"/><rect x="139" y="546" width="7" height="7" fill="#fdf8f2"/><rect x="146" y="546" width="7" height="7" fill="#b4bcc8"/><rect x="160" y="546" width="7" height="7" fill="#e2e2e2"/><rect x="174" y="546" width="7" height="7" fill="#d0d1d3"/><rect x="51" y="553" width="4" height="7" fill="#f2dccb"/><rect x="55" y="553" width="7" height="7" fill="#858a8f"/><rect x="62" y="553" width="7" height="7" fill="#778093"/><rect x="69" y="553" width="7" height="7" fill="#979493"/><rect x="76" y="553" width="7" height="7" fill="#777777"/><rect x="83" y="553" width="7" height="7" fill="#7d868a"/><rect x="90" y="553" width="7" height="7" fill="#8a909c"/><rect x="97" y="553" width="7" height="7" fill="#fcfdfe"/><rect x="104" y="553" width="7" height="7" fill="#a9abb0"/><rect x="111" y="553" width="7" height="7" fill="#e9eaea"/><rect x="118" y="553" width="7" height="7" fill="#bbbcbf"/><rect x="125" y="553" width="7" height="7" fill="#b0b2b4"/><rect x="132" y="553" width="7" height="7" fill="#aeadab"/><rect x="139" y="553" width="7" height="7" fill="#94867f"/><rect x="146" y="553" width="7" height="7" fill="#657487"/><rect x="153" y="553" width="7" height="7" fill="#7b7b7f"/><rect x="160" y="553" width="7" height="7" fill="#b4b9be"/><rect x="167" y="553" width="7" height="7" fill="#bdb5b0"/><rect x="174" y="553" width="7" height="7" fill="#7b8790"/><rect x="181" y="553" width="7" height="7" fill="#5f5859"/><rect x="188" y="553" width="7" height="7" fill="#edf3fc"/><rect x="55" y="560" width="7" height="7" fill="#ebe9e8"/><rect x="62" y="560" width="7" height="7" fill="#eceef2"/><rect x="69" y="560" width="7" height="7" fill="#eeeeee"/><rect x="76" y="560" width="7" height="7" fill="#ecebea"/><rect x="83" y="560" width="7" height="7" fill="#ecedf0"/><rect x="90" y="560" width="7" height="7" fill="#d8d8db"/><rect x="104" y="560" width="7" height="7" fill="#f3f4f4"/><rect x="111" y="560" width="7" height="7" fill="#f2f2f2"/><rect x="118" y="560" width="7" height="7" fill="#d8d8d8"/><rect x="125" y="560" width="7" height="7" fill="#f2f3f3"/><rect x="132" y="560" width="7" height="7" fill="#f2f2f2"/><rect x="139" y="560" width="7" height="7" fill="#f0eeec"/><rect x="146" y="560" width="7" height="7" fill="#adb3b8"/><rect x="153" y="560" width="7" height="7" fill="#eaeaea"/><rect x="160" y="560" width="7" height="7" fill="#d4d6da"/><rect x="167" y="560" width="7" height="7" fill="#fbf9f6"/><rect x="174" y="560" width="7" height="7" fill="#eaebee"/><rect x="181" y="560" width="7" height="7" fill="#e9e8e8"/><rect x="188" y="560" width="7" height="7" fill="#fcfefe"/><rect x="52" y="585" width="4" height="7" fill="#faf6f2"/><rect x="56" y="585" width="7" height="7" fill="#f2f2f2"/><rect x="63" y="585" width="7" height="7" fill="#f6f8fa"/><rect x="84" y="585" width="7" height="7" fill="#e6e8e8"/><rect x="98" y="585" width="7" height="7" fill="#e8eae9"/><rect x="119" y="585" width="7" height="7" fill="#f1f3f3"/><rect x="133" y="585" width="7" height="7" fill="#f2f2f2"/><rect x="140" y="585" width="7" height="7" fill="#f2f2f2"/><rect x="154" y="585" width="7" height="7" fill="#e7e9e8"/><rect x="175" y="585" width="7" height="7" fill="#fffefd"/><rect x="182" y="585" width="7" height="7" fill="#f3f3f3"/><rect x="52" y="592" width="4" height="7" fill="#d9c0ae"/><rect x="56" y="592" width="7" height="7" fill="#8a8b8e"/><rect x="63" y="592" width="7" height="7" fill="#9398a2"/><rect x="70" y="592" width="7" height="7" fill="#9b9791"/><rect x="77" y="592" width="7" height="7" fill="#7d7e81"/><rect x="84" y="592" width="7" height="7" fill="#8798a9"/><rect x="91" y="592" width="7" height="7" fill="#b0a7a0"/><rect x="98" y="592" width="7" height="7" fill="#7b8592"/><rect x="105" y="592" width="7" height="7" fill="#c1c4c9"/><rect x="119" y="592" width="7" height="7" fill="#aeaeb0"/><rect x="126" y="592" width="7" height="7" fill="#fbf1e8"/><rect x="133" y="592" width="7" height="7" fill="#bec6d2"/><rect x="140" y="592" width="7" height="7" fill="#8e8782"/><rect x="147" y="592" width="7" height="7" fill="#a4a9b4"/><rect x="154" y="592" width="7" height="7" fill="#8b847f"/><rect x="161" y="592" width="7" height="7" fill="#a0a4aa"/><rect x="168" y="592" width="7" height="7" fill="#9c9b9a"/><rect x="175" y="592" width="7" height="7" fill="#a2a8b4"/><rect x="182" y="592" width="7" height="7" fill="#bbbbbd"/><rect x="52" y="599" width="4" height="7" fill="#efe3dc"/><rect x="56" y="599" width="7" height="7" fill="#dfe0e2"/><rect x="63" y="599" width="7" height="7" fill="#bdc1c6"/><rect x="70" y="599" width="7" height="7" fill="#cccdcc"/><rect x="77" y="599" width="7" height="7" fill="#c6c6c7"/><rect x="84" y="599" width="7" height="7" fill="#babfc8"/><rect x="91" y="599" width="7" height="7" fill="#e3dfd9"/><rect x="98" y="599" width="7" height="7" fill="#b4bac5"/><rect x="105" y="599" width="7" height="7" fill="#dcd6d1"/><rect x="112" y="599" width="7" height="7" fill="#dbe2ea"/><rect x="119" y="599" width="7" height="7" fill="#c4c4c7"/><rect x="126" y="599" width="7" height="7" fill="#fffaf4"/><rect x="133" y="599" width="7" height="7" fill="#a7a8ab"/><rect x="140" y="599" width="7" height="7" fill="#d8d8d8"/><rect x="147" y="599" width="7" height="7" fill="#bfc3c8"/><rect x="154" y="599" width="7" height="7" fill="#ddd8d1"/><rect x="161" y="599" width="7" height="7" fill="#b8bbc0"/><rect x="168" y="599" width="7" height="7" fill="#c0bebc"/><rect x="175" y="599" width="7" height="7" fill="#d3d7db"/><rect x="182" y="599" width="7" height="7" fill="#c4c4c6"/><rect x="54" y="630" width="7" height="7" fill="#b9b8b7"/><rect x="61" y="630" width="7" height="7" fill="#c0c0c3"/><rect x="68" y="630" width="7" height="7" fill="#d7d7d9"/><rect x="75" y="630" width="7" height="7" fill="#d0cac8"/><rect x="82" y="630" width="7" height="7" fill="#e0e1e1"/><rect x="89" y="630" width="7" height="7" fill="#dcdde0"/><rect x="96" y="630" width="7" height="7" fill="#d4d4d8"/><rect x="103" y="630" width="7" height="7" fill="#bbbbbd"/><rect x="117" y="630" width="7" height="7" fill="#b4b4b4"/><rect x="124" y="630" width="7" height="7" fill="#c4c4ca"/><rect x="131" y="630" width="7" height="7" fill="#e0d8d2"/><rect x="138" y="630" width="7" height="7" fill="#eceeed"/><rect x="145" y="630" width="7" height="7" fill="#858a92"/><rect x="152" y="630" width="7" height="7" fill="#edf4fc"/><rect x="159" y="630" width="7" height="7" fill="#cdcdcd"/><rect x="166" y="630" width="7" height="7" fill="#a6a19d"/><rect x="173" y="630" width="7" height="7" fill="#a5a29f"/><rect x="180" y="630" width="7" height="7" fill="#cfd3d7"/><rect x="187" y="630" width="7" height="7" fill="#a5a7ae"/><rect x="194" y="630" width="7" height="7" fill="#d8d1ca"/><rect x="201" y="630" width="7" height="7" fill="#dfe8f0"/><rect x="208" y="630" width="7" height="7" fill="#e8e6e3"/><rect x="215" y="630" width="7" height="7" fill="#cdcdcd"/><rect x="222" y="630" width="7" height="7" fill="#d6d7d8"/><rect x="229" y="630" width="7" height="7" fill="#d4d6d8"/><rect x="236" y="630" width="7" height="7" fill="#f8f4f0"/><rect x="243" y="630" width="7" height="7" fill="#979ca3"/><rect x="250" y="630" width="7" height="7" fill="#d9d8d8"/><rect x="257" y="630" width="7" height="7" fill="#dedad7"/><rect x="264" y="630" width="7" height="7" fill="#e3e7ea"/><rect x="54" y="637" width="7" height="7" fill="#acabab"/><rect x="61" y="637" width="7" height="7" fill="#a09b96"/><rect x="68" y="637" width="7" height="7" fill="#778392"/><rect x="75" y="637" width="7" height="7" fill="#a39890"/><rect x="82" y="637" width="7" height="7" fill="#868d98"/><rect x="89" y="637" width="7" height="7" fill="#8a8581"/><rect x="96" y="637" width="7" height="7" fill="#74808c"/><rect x="103" y="637" width="7" height="7" fill="#a3a19f"/><rect x="110" y="637" width="7" height="7" fill="#f7fbfe"/><rect x="117" y="637" width="7" height="7" fill="#abaaaa"/><rect x="124" y="637" width="7" height="7" fill="#a9a4a2"/><rect x="131" y="637" width="7" height="7" fill="#a2a2a4"/><rect x="138" y="637" width="7" height="7" fill="#d4d2ce"/><rect x="145" y="637" width="7" height="7" fill="#929aa6"/><rect x="152" y="637" width="7" height="7" fill="#dfe2e8"/><rect x="159" y="637" width="7" height="7" fill="#b9b9bb"/><rect x="166" y="637" width="7" height="7" fill="#9c9692"/><rect x="173" y="637" width="7" height="7" fill="#9a9590"/><rect x="180" y="637" width="7" height="7" fill="#9399a4"/><rect x="187" y="637" width="7" height="7" fill="#a09f9e"/><rect x="194" y="637" width="7" height="7" fill="#b1b0ae"/><rect x="201" y="637" width="7" height="7" fill="#bcc1d2"/><rect x="208" y="637" width="7" height="7" fill="#a59f98"/><rect x="215" y="637" width="7" height="7" fill="#9ea3ac"/><rect x="222" y="637" width="7" height="7" fill="#807a76"/><rect x="229" y="637" width="7" height="7" fill="#9dabb9"/><rect x="236" y="637" width="7" height="7" fill="#d5c9c3"/><rect x="243" y="637" width="7" height="7" fill="#8793a2"/><rect x="250" y="637" width="7" height="7" fill="#7b7370"/><rect x="257" y="637" width="7" height="7" fill="#9ca5b3"/><rect x="264" y="637" width="7" height="7" fill="#bbbbbd"/><rect x="82" y="644" width="7" height="6" fill="#dedad4"/><rect x="89" y="644" width="7" height="6" fill="#d6d9de"/><rect x="103" y="644" width="7" height="6" fill="#f3f3f3"/><rect x="159" y="644" width="7" height="6" fill="#e8eae9"/><rect x="194" y="644" width="7" height="6" fill="#f2ece8"/><rect x="201" y="644" width="7" height="6" fill="#f4f9fd"/><rect x="52" y="672" width="7" height="7" fill="#d3cbc5"/><rect x="59" y="672" width="7" height="7" fill="#c5cad1"/><rect x="66" y="672" width="7" height="7" fill="#cacaca"/><rect x="73" y="672" width="7" height="7" fill="#b9bec6"/><rect x="80" y="672" width="7" height="7" fill="#cbc6c2"/><rect x="87" y="672" width="7" height="7" fill="#e2e6ea"/><rect x="94" y="672" width="7" height="7" fill="#f6ebe3"/><rect x="101" y="672" width="7" height="7" fill="#6b7280"/><rect x="108" y="672" width="7" height="7" fill="#fafdff"/><rect x="115" y="672" width="7" height="7" fill="#dcd6d1"/><rect x="122" y="672" width="7" height="7" fill="#9c9ea1"/><rect x="129" y="672" width="7" height="7" fill="#a4a5a8"/><rect x="136" y="672" width="7" height="7" fill="#b5b9be"/><rect x="143" y="672" width="7" height="7" fill="#a0a09f"/><rect x="150" y="672" width="7" height="7" fill="#a29ea0"/><rect x="157" y="672" width="7" height="7" fill="#c8ccc9"/><rect x="164" y="672" width="7" height="7" fill="#bdb7b3"/><rect x="171" y="672" width="7" height="7" fill="#e4ecf4"/><rect x="178" y="672" width="7" height="7" fill="#d0cac0"/><rect x="185" y="672" width="7" height="7" fill="#8f95a0"/><rect x="192" y="672" width="7" height="7" fill="#d6d8dc"/><rect x="52" y="679" width="7" height="7" fill="#bdb9b6"/><rect x="59" y="679" width="7" height="7" fill="#babbba"/><rect x="66" y="679" width="7" height="7" fill="#aaa6a3"/><rect x="73" y="679" width="7" height="7" fill="#a9b0bb"/><rect x="80" y="679" width="7" height="7" fill="#a79c92"/><rect x="87" y="679" width="7" height="7" fill="#8d9aa8"/><rect x="94" y="679" width="7" height="7" fill="#f8efe8"/><rect x="101" y="679" width="7" height="7" fill="#969aa4"/><rect x="108" y="679" width="7" height="7" fill="#d4d8db"/><rect x="115" y="679" width="7" height="7" fill="#c9c4c0"/><rect x="122" y="679" width="7" height="7" fill="#b5b9be"/><rect x="129" y="679" width="7" height="7" fill="#b4b0ab"/><rect x="136" y="679" width="7" height="7" fill="#969aa4"/><rect x="143" y="679" width="7" height="7" fill="#a4a6a5"/><rect x="150" y="679" width="7" height="7" fill="#969299"/><rect x="157" y="679" width="7" height="7" fill="#c0c6c6"/><rect x="164" y="679" width="7" height="7" fill="#b4a79c"/><rect x="171" y="679" width="7" height="7" fill="#d3dee8"/><rect x="178" y="679" width="7" height="7" fill="#b7b2aa"/><rect x="185" y="679" width="7" height="7" fill="#8d8e8f"/><rect x="192" y="679" width="7" height="7" fill="#b0b4be"/><rect x="80" y="686" width="7" height="4" fill="#a8a6a4"/><rect x="87" y="686" width="7" height="4" fill="#f4f6fc"/><rect x="115" y="686" width="7" height="4" fill="#fcfaf6"/><rect x="122" y="686" width="7" height="4" fill="#eef2f6"/><rect x="164" y="686" width="7" height="4" fill="#ececec"/><rect x="53" y="711" width="7" height="7" fill="#cbc6c2"/><rect x="60" y="711" width="7" height="7" fill="#c8ccd1"/><rect x="67" y="711" width="7" height="7" fill="#efefef"/><rect x="74" y="711" width="7" height="7" fill="#e8e9eb"/><rect x="81" y="711" width="7" height="7" fill="#efefef"/><rect x="88" y="711" width="7" height="7" fill="#e9e8e7"/><rect x="95" y="711" width="7" height="7" fill="#fcfdff"/><rect x="102" y="711" width="7" height="7" fill="#e6dfd9"/><rect x="109" y="711" width="7" height="7" fill="#c3cbd6"/><rect x="116" y="711" width="7" height="7" fill="#eae4e0"/><rect x="123" y="711" width="7" height="7" fill="#b7bbbf"/><rect x="130" y="711" width="7" height="7" fill="#dcdee4"/><rect x="137" y="711" width="7" height="7" fill="#c6c7c9"/><rect x="144" y="711" width="7" height="7" fill="#c6c4c2"/><rect x="151" y="711" width="7" height="7" fill="#d0d1d3"/><rect x="158" y="711" width="7" height="7" fill="#fdfaf6"/><rect x="165" y="711" width="7" height="7" fill="#ecedef"/><rect x="172" y="711" width="7" height="7" fill="#fcfaf7"/><rect x="179" y="711" width="7" height="7" fill="#b9bcc0"/><rect x="53" y="718" width="7" height="7" fill="#8d8783"/><rect x="60" y="718" width="7" height="7" fill="#939495"/><rect x="67" y="718" width="7" height="7" fill="#7f7d7d"/><rect x="74" y="718" width="7" height="7" fill="#666978"/><rect x="81" y="718" width="7" height="7" fill="#98a1a6"/><rect x="88" y="718" width="7" height="7" fill="#746861"/><rect x="95" y="718" width="7" height="7" fill="#b6c4d2"/><rect x="102" y="718" width="7" height="7" fill="#d8cac0"/><rect x="109" y="718" width="7" height="7" fill="#94a3b3"/><rect x="116" y="718" width="7" height="7" fill="#bbbcbf"/><rect x="123" y="718" width="7" height="7" fill="#9f9995"/><rect x="130" y="718" width="7" height="7" fill="#85828a"/><rect x="137" y="718" width="7" height="7" fill="#989fa7"/><rect x="144" y="718" width="7" height="7" fill="#7b746f"/><rect x="151" y="718" width="7" height="7" fill="#95a0ad"/><rect x="158" y="718" width="7" height="7" fill="#fefaf4"/><rect x="165" y="718" width="7" height="7" fill="#778089"/><rect x="172" y="718" width="7" height="7" fill="#9b9491"/><rect x="179" y="718" width="7" height="7" fill="#7d888f"/><rect x="186" y="718" width="7" height="7" fill="#e0e0e2"/><rect x="88" y="725" width="7" height="5" fill="#c4c4c6"/><rect x="95" y="725" width="7" height="5" fill="#e8e8e8"/><rect x="116" y="725" width="7" height="5" fill="#eee8e4"/><rect x="123" y="725" width="7" height="5" fill="#e6eef8"/><rect x="151" y="725" width="7" height="5" fill="#d6d6d8"/></svg>
</div>
<div id="footer">© Takenplanner - <b>HV Forte '83</b></div>
<div id="devbtn" class="abs" style="left:1870px;top:912px;width:27px;height:26px;border:1px solid #6c757d;border-radius:4px">
<svg class="abs" style="left:4.500px;top:5.300px" width="18" height="15" viewBox="0 0 18 15"><circle cx="6.200" cy="3.400" r="3.400" fill="#6c757d"/><path d="M0 14.200c0-3.700 2.300-6 5-6h2.400c.5 0 1 .1 1.400.2v5.800z" fill="#6c757d"/><path d="M12.600 7.300l3.900 1.400c.2 3.500-1.500 5.400-3.900 6.300-2.400-.9-4.100-2.800-3.900-6.300z" fill="#6c757d"/><path d="M12.600 8.700l2.700.95c0 2.300-1 3.500-2.700 4.200z" fill="#f8f9fa"/></svg>
</div>

</body>
</html>
